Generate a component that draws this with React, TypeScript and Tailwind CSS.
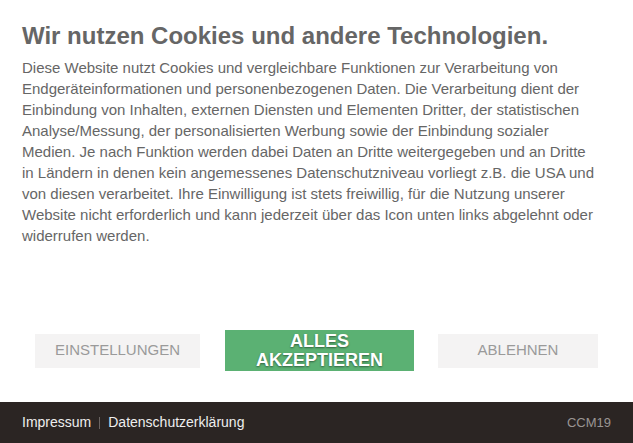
const lines = [
  'Diese Website nutzt Cookies und vergleichbare Funktionen zur Verarbeitung von',
  'Endgeräteinformationen und personenbezogenen Daten. Die Verarbeitung dient der',
  'Einbindung von Inhalten, externen Diensten und Elementen Dritter, der statistischen',
  'Analyse/Messung, der personalisierten Werbung sowie der Einbindung sozialer',
  'Medien. Je nach Funktion werden dabei Daten an Dritte weitergegeben und an Dritte',
  'in Ländern in denen kein angemessenes Datenschutzniveau vorliegt z.B. die USA und',
  'von diesen verarbeitet. Ihre Einwilligung ist stets freiwillig, für die Nutzung unserer',
  'Website nicht erforderlich und kann jederzeit über das Icon unten links abgelehnt oder',
  'widerrufen werden.',
]

export default function App() {
  return (
    <div className="flex h-[443px] w-[633px] flex-col bg-white font-['Liberation_Sans',Arial,sans-serif]">
      <div className="flex-1 pl-[22px] pt-[21px]">
        <h2 className="whitespace-nowrap text-[24px] font-bold leading-[30px] text-[#666666]">
          Wir nutzen Cookies und andere Technologien.
        </h2>
        <p className="mt-[6px] whitespace-nowrap text-[15px] leading-[21px] text-[#666666]">
          {lines.map((l, i) => (
            <span key={i} className="block">
              {l}
            </span>
          ))}
        </p>
      </div>
      <div className="flex items-center pb-[31px] pl-[35px] pr-[35px]">
        <button className="h-[34px] w-[165px] bg-[#f4f3f3] text-[15px] uppercase text-[#9a9a9a]">
          Einstellungen
        </button>
        <button className="ml-[25px] h-[41px] w-[189px] bg-[#5bb173] text-[18px] font-bold uppercase leading-[19px] text-white [text-shadow:0_1px_2px_rgba(0,0,0,0.45)]">
          Alles
          <br />
          Akzeptieren
        </button>
        <button className="ml-[24px] h-[34px] w-[160px] bg-[#f4f3f3] text-[15px] uppercase text-[#9a9a9a]">
          Ablehnen
        </button>
      </div>
      <footer className="flex h-[41px] items-center justify-between bg-[#2b2523] pl-[22px] pr-[22px]">
        <div className="flex items-center text-[14px] text-[#eeeeee]">
          <a>Impressum</a>
          <span className="mx-[8px] h-[12px] w-px bg-[#6a6462]" />
          <a>Datenschutzerklärung</a>
        </div>
        <span className="text-[13px] text-[#9a9593]">CCM19</span>
      </footer>
    </div>
  )
}
